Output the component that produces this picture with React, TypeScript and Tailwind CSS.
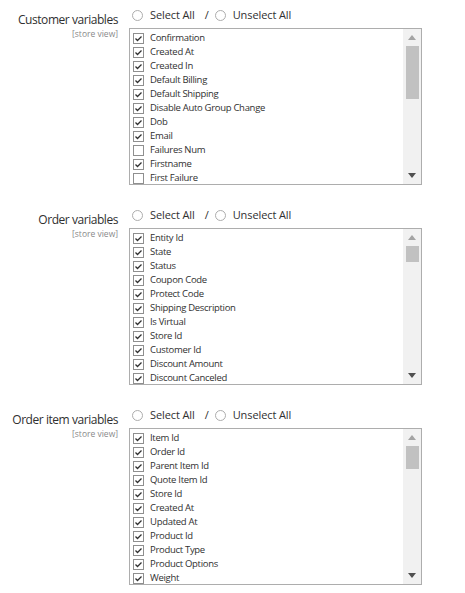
import React from "react";

type Item = { label: string; checked: boolean };

interface Section {
  title: string;
  thumbTop: number;
  thumbHeight: number;
  items: Item[];
}

const c = (label: string, checked = true): Item => ({ label, checked });

const SECTIONS: Section[] = [
  {
    title: "Customer variables",
    thumbTop: 0,
    thumbHeight: 53,
    items: [
      c("Confirmation"),
      c("Created At"),
      c("Created In"),
      c("Default Billing"),
      c("Default Shipping"),
      c("Disable Auto Group Change"),
      c("Dob"),
      c("Email"),
      c("Failures Num", false),
      c("Firstname"),
      c("First Failure", false),
    ],
  },
  {
    title: "Order variables",
    thumbTop: 0,
    thumbHeight: 16,
    items: [
      c("Entity Id"),
      c("State"),
      c("Status"),
      c("Coupon Code"),
      c("Protect Code"),
      c("Shipping Description"),
      c("Is Virtual"),
      c("Store Id"),
      c("Customer Id"),
      c("Discount Amount"),
      c("Discount Canceled"),
    ],
  },
  {
    title: "Order item variables",
    thumbTop: 0,
    thumbHeight: 23,
    items: [
      c("Item Id"),
      c("Order Id"),
      c("Parent Item Id"),
      c("Quote Item Id"),
      c("Store Id"),
      c("Created At"),
      c("Updated At"),
      c("Product Id"),
      c("Product Type"),
      c("Product Options"),
      c("Weight"),
    ],
  },
];

function Radio({ label }: { label: string }) {
  return (
    <label className="flex items-center gap-[7px]">
      <span className="w-[11px] h-[11px] rounded-full border border-[#adadad] bg-white" />
      <span>{label}</span>
    </label>
  );
}

function Checkbox({ checked }: { checked: boolean }) {
  return (
    <span className="w-[11px] h-[11px] shrink-0 border border-[#8f8f8f] bg-white flex items-center justify-center">
      {checked && (
        <svg width="9" height="9" viewBox="0 0 9 9">
          <polyline points="1.5,4.5 3.5,6.5 7.5,2.5" fill="none" stroke="#303030" strokeWidth="1.3" />
        </svg>
      )}
    </span>
  );
}

function Scrollbar({ thumbTop, thumbHeight }: { thumbTop: number; thumbHeight: number }) {
  return (
    <div className="w-[18px] shrink-0 bg-[#f1f1f1] flex flex-col items-center">
      <div className="h-[17px] w-full flex items-center justify-center">
        <svg width="8" height="5" viewBox="0 0 8 5">
          <polygon points="0,5 8,5 4,0" fill="#a3a3a3" />
        </svg>
      </div>
      <div className="flex-1 w-full px-[2px]">
        <div
          className="bg-[#c1c1c1] w-[13px] mx-auto"
          style={{ marginTop: thumbTop, height: thumbHeight }}
        />
      </div>
      <div className="h-[17px] w-full flex items-center justify-center">
        <svg width="8" height="5" viewBox="0 0 8 5">
          <polygon points="0,0 8,0 4,5" fill="#505050" />
        </svg>
      </div>
    </div>
  );
}

function VariableSection({ section }: { section: Section }) {
  return (
    <div className="flex">
      <div className="w-[118px] shrink-0 text-right pt-[3px]">
        <div className="text-[12px] leading-[18px] text-[#303030] tracking-[-0.45px] whitespace-nowrap">
          {section.title}
        </div>
        <div className="text-[8.5px] leading-[11px] text-[#8a8a8a] -mt-[1px] whitespace-nowrap">[store view]</div>
      </div>
      <div className="ml-[11px] flex flex-col">
        <div className="flex items-center h-[15px] pl-[3px] text-[11px] text-[#303030] tracking-[-0.1px]">
          <Radio label="Select All" />
          <span className="ml-[10px] mr-[6px]">/</span>
          <Radio label="Unselect All" />
        </div>
        <div className="mt-[5px] w-[293px] h-[157px] border border-[#adadad] bg-white flex overflow-hidden">
          <div className="flex-1 overflow-hidden pt-[2px] pl-[3px]">
            {section.items.map((item, i) => (
              <div
                key={i}
                className="h-[14px] flex items-center gap-[6px] text-[9.5px] text-[#303030] tracking-[-0.3px]"
              >
                <Checkbox checked={item.checked} />
                <span className="whitespace-nowrap">{item.label}</span>
              </div>
            ))}
          </div>
          <Scrollbar thumbTop={section.thumbTop} thumbHeight={section.thumbHeight} />
        </div>
      </div>
    </div>
  );
}

export default function App() {
  return (
    <div
      className="w-[465px] h-[593px] bg-white pt-[8px] flex flex-col gap-[23px]"
      style={{ fontFamily: '"Open Sans", "Liberation Sans", sans-serif' }}
    >
      {SECTIONS.map((s) => (
        <VariableSection key={s.title} section={s} />
      ))}
    </div>
  );
}
